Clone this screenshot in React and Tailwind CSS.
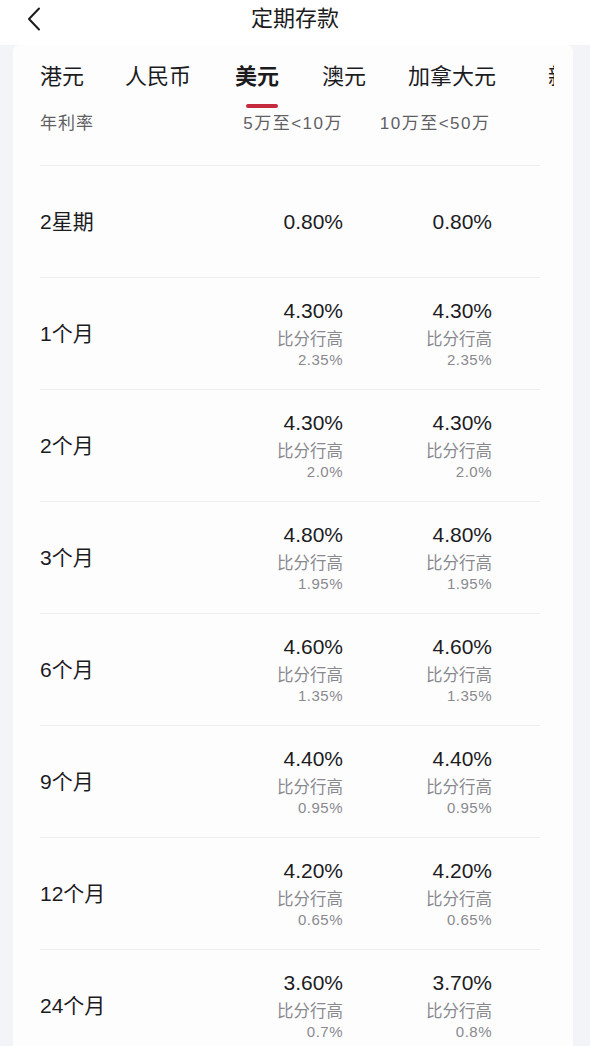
const rows = [
  { term: "2星期", a: "0.80%", b: "0.80%" },
  { term: "1个月", a: "4.30%", b: "4.30%", da: "2.35%", db: "2.35%" },
  { term: "2个月", a: "4.30%", b: "4.30%", da: "2.0%", db: "2.0%" },
  { term: "3个月", a: "4.80%", b: "4.80%", da: "1.95%", db: "1.95%" },
  { term: "6个月", a: "4.60%", b: "4.60%", da: "1.35%", db: "1.35%" },
  { term: "9个月", a: "4.40%", b: "4.40%", da: "0.95%", db: "0.95%" },
  { term: "12个月", a: "4.20%", b: "4.20%", da: "0.65%", db: "0.65%" },
  { term: "24个月", a: "3.60%", b: "3.70%", da: "0.7%", db: "0.8%" },
];

const tabs = ["港元", "人民币", "美元", "澳元", "加拿大元", "新"];

function Rate({ value, diff }) {
  return (
    <div className="flex flex-col items-end">
      <span className="text-[21px] leading-[26px] text-[#1c1c1e]">{value}</span>
      {diff && (
        <>
          <span className="text-[16.5px] leading-[22px] mt-[4px] text-[#8a8a8e]">比分行高</span>
          <span className="text-[15px] leading-[20px] text-[#8a8a8e] tracking-[0.5px]">{diff}</span>
        </>
      )}
    </div>
  );
}

export default function App() {
  return (
    <div
      className="w-[590px] h-[1046px] overflow-hidden bg-[#f3f4f7]"
      style={{ fontFamily: '"Liberation Sans", "Noto Sans CJK SC", sans-serif' }}
    >
      {/* HEADER */}
      <div className="relative h-[45px] bg-white flex items-center justify-center">
        <svg
          className="absolute left-[27px] top-[7px]"
          width="14"
          height="24"
          viewBox="0 0 14 24"
          fill="none"
        >
          <polyline
            points="12,1.5 2,12 12,22.5"
            stroke="#1c1c1e"
            strokeWidth="2"
            strokeLinecap="round"
            strokeLinejoin="round"
          />
        </svg>
        <h1 className="text-[22px] text-[#1c1c1e] -mt-[8px]">定期存款</h1>
      </div>

      {/* CARD */}
      <div className="ml-[13px] w-[560px] bg-[#fdfdfe] rounded-t-[6px] pl-[27px] pr-[33px]">
        {/* TABS */}
        <div className="flex items-end h-[48px] text-[22px] text-[#1c1c1e] whitespace-nowrap">
          <div className="w-[85px] shrink-0">{tabs[0]}</div>
          <div className="w-[110px] shrink-0">{tabs[1]}</div>
          <div className="w-[87px] shrink-0 relative font-bold">
            {tabs[2]}
            <div className="absolute left-[11px] top-[44px] w-[32px] h-[4px] rounded-full bg-[#c52a3e]" />
          </div>
          <div className="w-[86px] shrink-0">{tabs[3]}</div>
          <div className="w-[140px] shrink-0">{tabs[4]}</div>
          <div className="w-[6px] shrink-0 overflow-hidden">{tabs[5]}</div>
        </div>

        <div className="flex items-center h-[46px] mt-[8px] text-[17px] text-[#5f5f64]">
          <div className="w-[200px] tracking-[1px]">年利率</div>
          <div className="w-[103px] text-right tracking-[1.5px] -mr-[1.5px]">5万至&lt;10万</div>
          <div className="w-[149px] text-right tracking-[1.5px] -mr-[1.5px]">10万至&lt;50万</div>
        </div>

        <div className="mt-[18px]">
          {rows.map((r) => (
            <div
              key={r.term}
              className="flex items-center h-[112px] border-t border-[#eeeff2]"
            >
              <div className="w-[200px] text-[21px] text-[#1c1c1e]">{r.term}</div>
              <div className="w-[103px]">
                <Rate value={r.a} diff={r.da} />
              </div>
              <div className="w-[149px]">
                <Rate value={r.b} diff={r.db} />
              </div>
            </div>
          ))}
        </div>
      </div>
    </div>
  );
}
